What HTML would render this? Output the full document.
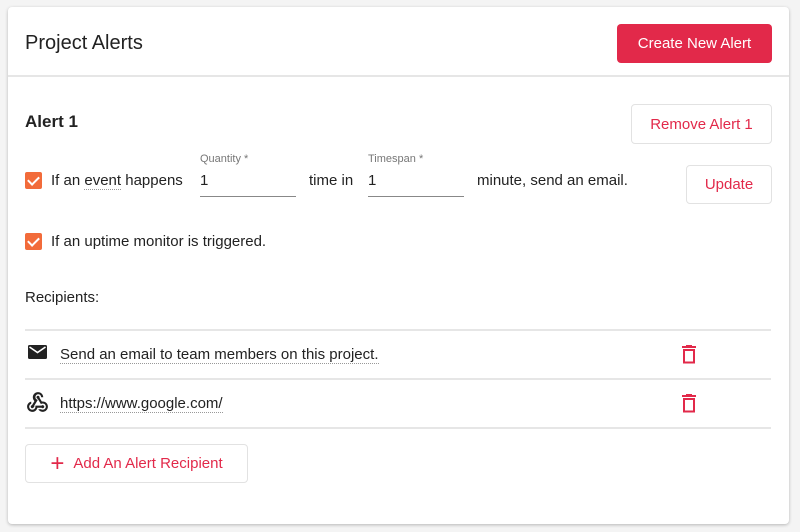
<!DOCTYPE html>
<html><head><style>
body{margin:0;width:800px;height:532px;background:#f4f4f4;font-family:"Liberation Sans",sans-serif;color:#222;position:relative;overflow:hidden}
.card{position:absolute;left:8px;top:7px;width:781px;height:517px;background:#fff;border-radius:4px;box-shadow:0 1px 3px rgba(0,0,0,.25)}
.a{position:absolute;white-space:nowrap}
.btn{position:absolute;box-sizing:border-box;border:1px solid #e2e2e2;border-radius:4px;background:#fff;color:#e2294a;font-size:15px;display:flex;align-items:center;justify-content:center}
.hr{position:absolute;left:25px;width:746px;height:2px;background:#e6e6e6}
.cb{position:absolute;left:25px;width:17px;height:17px;background:#f26b3a;border-radius:2px}
.cb:after{content:"";position:absolute;left:5px;top:2px;width:5px;height:9px;border:solid #fff;border-width:0 2px 2px 0;transform:rotate(45deg)}
.t{font-size:15px}
.dot{border-bottom:1px dotted #999}
.lbl{font-size:11px;color:#777}
.in{position:absolute;height:1px;background:#888;width:96px}
</style></head><body>
<div class="card"></div>
<div class="a" style="left:25px;top:32px;font-size:20px;color:#222">Project Alerts</div>
<div class="btn" style="left:617px;top:24px;width:155px;height:39px;background:#e2294a;border:none;color:#fff">Create New Alert</div>
<div style="position:absolute;left:8px;top:75px;width:781px;height:2px;background:#e6e6e6"></div>
<div class="a" style="left:25px;top:112px;font-size:17px;font-weight:bold">Alert 1</div>
<div class="btn" style="left:631px;top:104px;width:141px;height:40px">Remove Alert 1</div>
<div class="cb" style="top:172px"></div>
<div class="a t" style="left:51px;top:172px">If an <span class="dot">event</span> happens</div>
<div class="a lbl" style="left:200px;top:153px">Quantity *</div>
<div class="a t" style="left:200px;top:172px">1</div>
<div class="in" style="left:200px;top:196px"></div>
<div class="a t" style="left:309px;top:172px">time in</div>
<div class="a lbl" style="left:368px;top:153px">Timespan *</div>
<div class="a t" style="left:368px;top:172px">1</div>
<div class="in" style="left:368px;top:196px"></div>
<div class="a t" style="left:477px;top:172px">minute, send an email.</div>
<div class="btn" style="left:686px;top:165px;width:86px;height:39px">Update</div>
<div class="cb" style="top:233px"></div>
<div class="a t" style="left:51px;top:233px">If an uptime monitor is triggered.</div>
<div class="a t" style="left:25px;top:289px">Recipients:</div>
<div class="hr" style="top:329px"></div>
<svg class="a" style="left:28px;top:345px" width="20" height="15" viewBox="0 0 20 15"><rect x="0" y="0" width="19" height="14" rx="1.5" fill="#222"/><path d="M1.5 2 L9.5 7.5 L17.5 2" stroke="#fff" stroke-width="1.6" fill="none"/></svg>
<div class="a t" style="left:60px;top:346px"><span class="dot">Send an email to team members on this project.</span></div>
<svg class="a" style="left:681px;top:345px" width="16" height="19" viewBox="0 0 16 19"><rect x="1" y="1" width="14" height="2" fill="#e2294a"/><rect x="5" y="0" width="6" height="2" fill="#e2294a"/><rect x="3" y="5" width="10" height="12.5" fill="none" stroke="#e2294a" stroke-width="2"/></svg>
<div class="hr" style="top:378px"></div>
<svg class="a" style="left:25px;top:390px" width="25" height="25" viewBox="0 0 24 24" fill="#222"><path d="M10 15h5.88c.27-.31.67-.5 1.12-.5.83 0 1.5.67 1.5 1.5s-.67 1.5-1.5 1.5c-.44 0-.84-.19-1.12-.5H11.9c-.46 2.28-2.48 4-4.9 4-2.76 0-5-2.240-5-5 0-2.42 1.72-4.44 4-4.9v2.07c-1.16.41-2 1.53-2 2.83 0 1.650 1.35 3 3 3s3-1.35 3-3v-1zm2.5-11c1.65 0 3 1.35 3 3h2c0-2.76-2.24-5-5-5s-5 2.24-5 5c0 1.43.6 2.71 1.55 3.62l-2.35 3.9c-.68.14-1.2.75-1.2 1.48 0 .83.67 1.5 1.5 1.5S9 16.33 9 15.5c0-.16-.02-.31-.07-.45l3.38-5.63C10.890 9.17 10 8.44 10 7c0-1.65 1.35-3 3-3zm4.5 9c-.64 0-1.23.2-1.72.54l-3.05-5.07C11.53 8.35 11 7.74 11 7c0-.83.67-1.5 1.5-1.5S14 6.170 14 7c0 .15-.02.29-.06.43l2.19 3.65c.28-.05.57-.08.87-.08 2.76 0 5 2.24 5 5s-2.24 5-5 5c-1.85 0-3.47-1.01-4.33-2.5h2.67c.48.32 1.05.5 1.66.5 1.65 0 3-1.35 3-3s-1.35-3-3-3z"/></svg>
<div class="a t" style="left:60px;top:395px"><span class="dot">https://www.google.com/</span></div>
<svg class="a" style="left:681px;top:394px" width="16" height="19" viewBox="0 0 16 19"><rect x="1" y="1" width="14" height="2" fill="#e2294a"/><rect x="5" y="0" width="6" height="2" fill="#e2294a"/><rect x="3" y="5" width="10" height="12.5" fill="none" stroke="#e2294a" stroke-width="2"/></svg>
<div class="hr" style="top:427px"></div>
<div class="btn" style="left:25px;top:444px;width:223px;height:39px"><span style="font-size:24px;font-weight:300;margin-right:9px;line-height:1">+</span>Add An Alert Recipient</div>
</body></html>
